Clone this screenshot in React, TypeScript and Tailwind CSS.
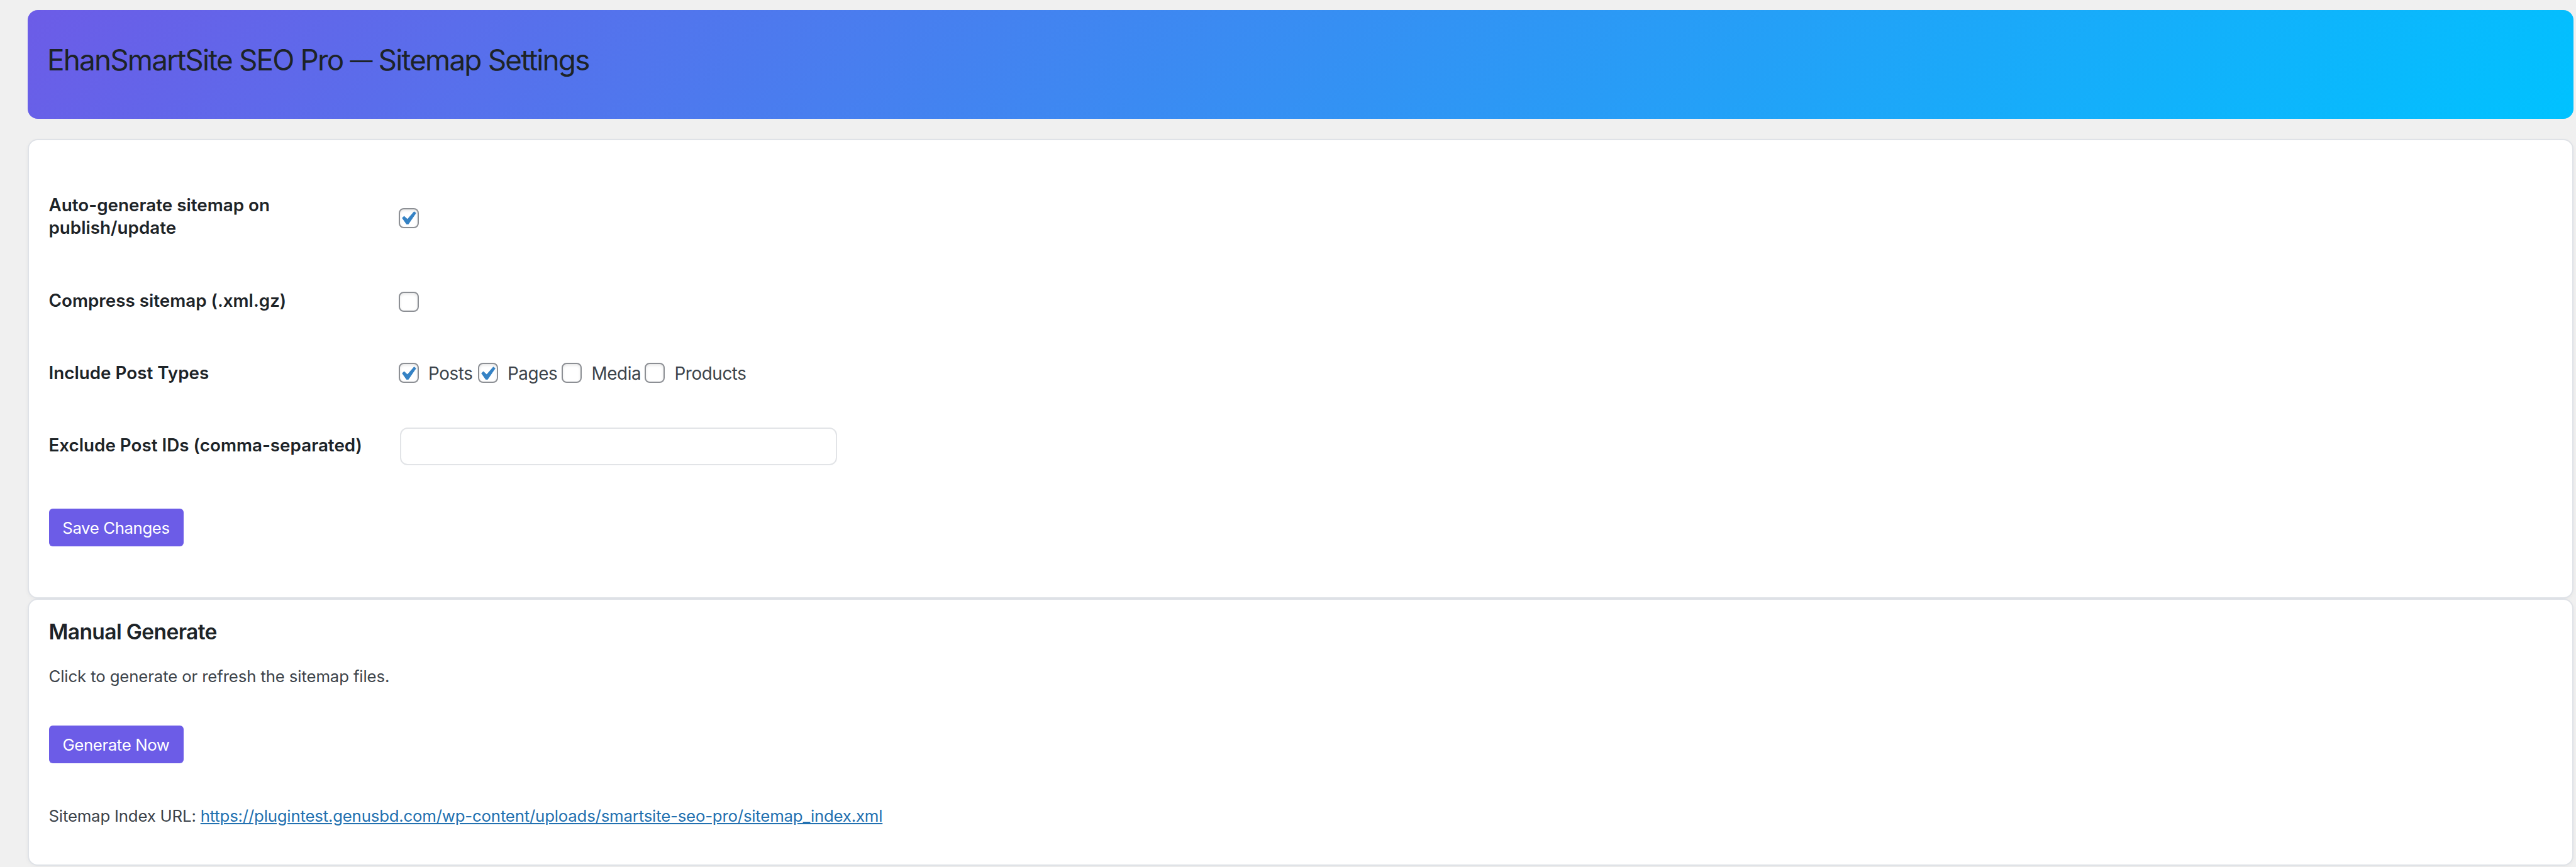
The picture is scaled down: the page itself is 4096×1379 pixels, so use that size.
import type { ReactNode } from "react"

function Checkbox({ checked = false }: { checked?: boolean }) {
  return (
    <span className="flex h-8 w-8 shrink-0 items-center justify-center rounded-[8px] border-2 border-[#8c8f94] bg-white shadow-[inset_0_2px_4px_rgba(0,0,0,0.1)]">
      {checked && (
        <svg viewBox="0 0 20 20" className="h-[41px] w-[41px] shrink-0 -translate-x-px translate-y-px">
          <path
            d="M14.83 4.89l1.34.94-5.81 8.38H9.02L5.78 9.67l1.34-1.25 2.57 2.4z"
            fill="#3582c4"
            stroke="#3582c4"
            strokeWidth="0.5"
          />
        </svg>
      )}
    </span>
  )
}

function Label({ children }: { children: ReactNode }) {
  return (
    <div className="w-[556px] pt-[2px] text-[27.8px] leading-[35.75px] font-semibold text-[#1d2327]">{children}</div>
  )
}

function PrimaryButton({ children }: { children: ReactNode }) {
  return (
    <button className="flex h-[60px] w-[214px] items-center justify-center rounded-[6px] bg-[#6c5ce7] pt-[2px] text-[25.8px] tracking-[-0.4px] text-white">
      {children}
    </button>
  )
}

const postTypes = [
  { label: "Posts", checked: true, width: "w-[126px]" },
  { label: "Pages", checked: true, width: "w-[133.5px]" },
  { label: "Media", checked: false, width: "w-[132px]" },
  { label: "Products", checked: false, width: "w-[180px]" },
]

export default function App() {
  return (
    <div className="h-[1379px] w-[4096px] overflow-hidden bg-[#f0f0f0] pt-4 pr-1 pl-11 font-[Inter,sans-serif] text-[#3c434a]">
      <header className="h-[173px] rounded-[16px] bg-[linear-gradient(135deg,#6c5ce7,#00c2ff)] pt-[50px] pl-[31px]">
        <h1 className="text-[45.9px] leading-[60px] tracking-[-1.85px] text-[#1d2327]">
          EhanSmartSite SEO Pro <span className="align-[3px] text-[36px] leading-none">—</span> Sitemap Settings
        </h1>
      </header>

      <section className="mt-8 h-[731px] rounded-[16px] border-2 border-[#dfe2e7] bg-white pt-[53.6px] pl-[31.5px] shadow-[0_2px_6px_rgba(0,0,0,0.04)]">
        <div className="flex h-[134px] items-center">
          <Label>
            Auto-generate sitemap on
            <br />
            publish/update
          </Label>
          <div className="pt-[6px]">
            <Checkbox checked />
          </div>
        </div>
        <div className="flex h-[134px] items-center">
          <Label>Compress sitemap (.xml.gz)</Label>
          <div className="pt-[4px]">
            <Checkbox />
          </div>
        </div>
        <div className="flex h-[96.2px] items-center">
          <Label>Include Post Types</Label>
          <div className="flex pt-[1px]">
            {postTypes.map((type) => (
              <label
                key={type.label}
                className={`flex items-center gap-[15.5px] text-[27.8px] tracking-[-0.4px] ${type.width}`}
              >
                <Checkbox checked={type.checked} />
                <span className="pt-[3px]">{type.label}</span>
              </label>
            ))}
          </div>
        </div>
        <div className="flex h-[134.6px] items-center">
          <Label>Exclude Post IDs (comma-separated)</Label>
          <div className="pt-[4px] pl-[2px]">
            <input type="text" className="block h-[60px] w-[695px] rounded-[12px] border-2 border-[#e2e4e7] bg-white" />
          </div>
        </div>
        <div className="mt-[34px]">
          <PrimaryButton>Save Changes</PrimaryButton>
        </div>
      </section>

      <section className="h-[425px] rounded-[16px] border-2 border-[#dfe2e7] bg-white pt-[31px] pl-[31.5px] text-[25.8px] shadow-[0_2px_6px_rgba(0,0,0,0.04)]">
        <h2 className="text-[33.6px] leading-[40px] font-semibold tracking-[-0.65px] text-[#1d2327]">
          Manual Generate
        </h2>
        <p className="mt-[31px] leading-[40px] tracking-[-0.14px]">Click to generate or refresh the sitemap files.</p>
        <div className="mt-[58px]">
          <PrimaryButton>Generate Now</PrimaryButton>
        </div>
        <p className="mt-[64px] leading-[40px] tracking-[-0.2px]">
          Sitemap Index URL:{" "}
          <a href="#" className="text-[#2271b1] underline">
            https://plugintest.genusbd.com/wp-content/uploads/smartsite-seo-pro/sitemap_index.xml
          </a>
        </p>
      </section>
    </div>
  )
}
